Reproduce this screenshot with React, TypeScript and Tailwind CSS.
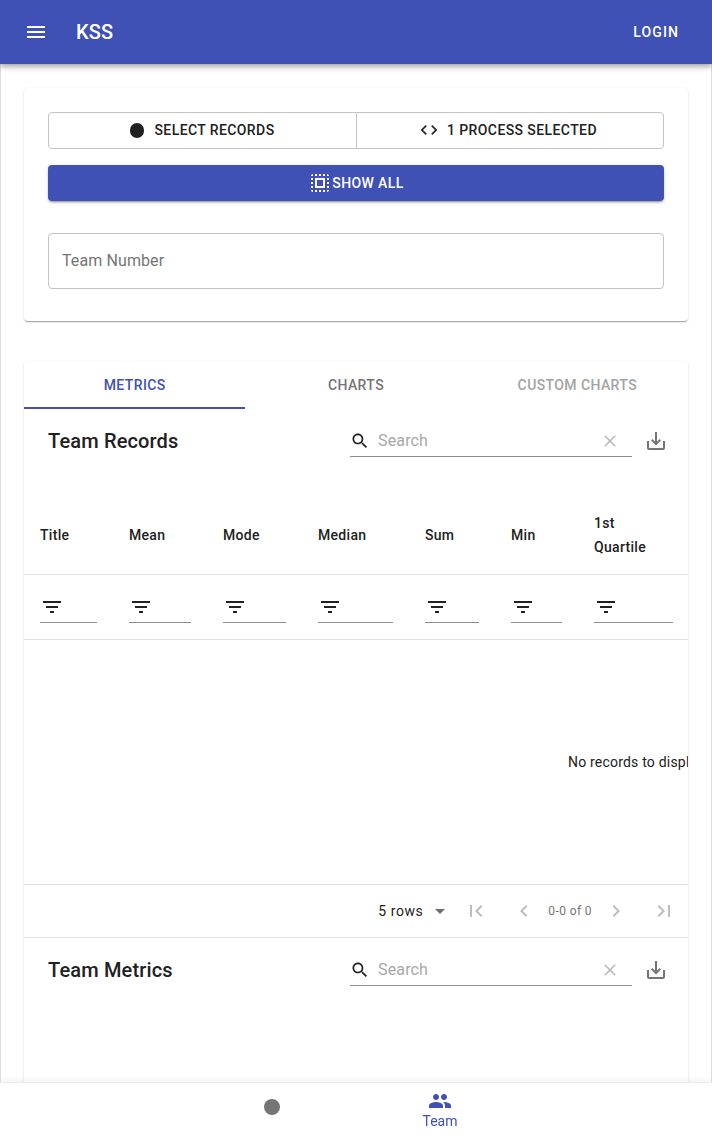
import React from "react";

const paths = {
  menu: "M3 18h18v-2H3v2zm0-5h18v-2H3v2zm0-7v2h18V6H3z",
  code: "M9.4 16.6L4.8 12l4.6-4.6L8 6l-6 6 6 6 1.4-1.4zm5.2 0l4.6-4.6-4.6-4.6L16 6l6 6-6 6-1.4-1.4z",
  selectAll:
    "M3 5h2V3c-1.1 0-2 .9-2 2zm0 8h2v-2H3v2zm4 8h2v-2H7v2zM3 9h2V7H3v2zm10-6h-2v2h2V3zm6 0v2h2c0-1.1-.9-2-2-2zM5 21v-2H3c0 1.1.9 2 2 2zm-2-4h2v-2H3v2zM9 3H7v2h2V3zm2 18h2v-2h-2v2zm8-8h2v-2h-2v2zm0 8c1.1 0 2-.9 2-2h-2v2zm0-12h2V7h-2v2zm0 8h2v-2h-2v2zm-4 4h2v-2h-2v2zm0-16h2V3h-2v2zM7 17h10V7H7v10zm2-8h6v6H9V9z",
  search:
    "M15.5 14h-.79l-.28-.27C15.41 12.59 16 11.11 16 9.5 16 5.91 13.09 3 9.5 3S3 5.91 3 9.5 5.91 16 9.5 16c1.61 0 3.09-.59 4.23-1.57l.27.28v.79l5 4.99L20.49 19l-4.99-5zm-6 0C7.01 14 5 11.99 5 9.5S7.01 5 9.5 5 14 7.01 14 9.5 11.99 14 9.5 14z",
  clear:
    "M19 6.41L17.59 5 12 10.59 6.41 5 5 6.41 10.59 12 5 17.59 6.41 19 12 13.41 17.59 19 19 17.59 13.41 12z",
  save: "M19 12v7H5v-7H3v7c0 1.1.9 2 2 2h14c1.1 0 2-.9 2-2v-7h-2zm-6 .67l2.59-2.58L17 11.5l-5 5-5-5 1.41-1.41L11 12.67V3h2z",
  filter: "M10 18h4v-2h-4v2zM3 6v2h18V6H3zm3 7h12v-2H6v2z",
  first: "M18.41 16.59L13.82 12l4.59-4.59L17 6l-6 6 6 6zM6 6h2v12H6z",
  prev: "M15.41 7.41L14 6l-6 6 6 6 1.41-1.41L10.83 12z",
  next: "M10 6L8.59 7.41 13.17 12l-4.58 4.59L10 18l6-6z",
  last: "M5.59 7.41L10.18 12l-4.59 4.59L7 18l6-6-6-6zM16 6h2v12h-2z",
  people:
    "M16 11c1.66 0 2.99-1.34 2.99-3S17.66 5 16 5c-1.66 0-3 1.34-3 3s1.34 3 3 3zm-8 0c1.66 0 2.99-1.34 2.99-3S9.66 5 8 5C6.34 5 5 6.34 5 8s1.34 3 3 3zm0 2c-2.33 0-7 1.17-7 3.5V19h14v-2.5c0-2.33-4.67-3.5-7-3.5zm8 0c-.29 0-.62.02-.97.05 1.16.84 1.97 1.97 1.97 3.45V19h6v-2.5c0-2.33-4.67-3.5-7-3.5z",
  drop: "M7 10l5 5 5-5z",
};

const Icon = ({ d, className }: { d: string; className: string }) => (
  <svg viewBox="0 0 24 24" fill="currentColor" className={`shrink-0 ${className}`}>
    <path d={d} />
  </svg>
);

const columns = [
  { label: "Title", input: "w-[57px]" },
  { label: "Mean", input: "w-[62px]" },
  { label: "Mode", input: "w-[63px]" },
  { label: "Median", input: "w-[75px]" },
  { label: "Sum", input: "w-[54px]" },
  { label: "Min", input: "w-[51px]" },
  { label: "1st Quartile", input: "w-[79px]" },
];

const gridCols = "grid grid-cols-[89px_94px_95px_107px_86px_83px_110px]";

const Toolbar = ({ title }: { title: string }) => (
  <div className="flex h-16 items-center pl-6 pr-5">
    <h2 className="flex-1 text-[20px] font-medium tracking-[0.15px] text-[#212121]">{title}</h2>
    <div className="flex h-8 w-[282px] items-center border-b border-[#8c8c8c]">
      <Icon d={paths.search} className="h-5 w-5 text-[#212121]" />
      <span className="ml-2 flex-1 text-base tracking-[0.15px] text-[#a8a8a8]">Search</span>
      <Icon d={paths.clear} className="mr-3 h-5 w-5 text-[#bdbdbd]" />
    </div>
    <div className="ml-3 flex h-6 w-6 items-center justify-center text-[#757575]">
      <Icon d={paths.save} className="h-6 w-6" />
    </div>
  </div>
);

export default function App() {
  return (
    <div className="relative h-[1138px] overflow-hidden bg-white font-['Roboto',sans-serif]">
      <header className="relative z-10 flex h-16 items-center bg-[#3f51b5] pl-6 pr-[33px] text-white shadow-[0_2px_4px_-1px_rgba(0,0,0,0.2),0_4px_5px_0_rgba(0,0,0,0.14),0_1px_10px_0_rgba(0,0,0,0.12)]">
        <Icon d={paths.menu} className="h-6 w-6" />
        <span className="ml-7 flex-1 text-[20px] font-medium tracking-[0.15px]">KSS</span>
        <span className="text-sm font-medium tracking-[1.1px]">LOGIN</span>
      </header>

      <main className="h-[1074px] border-x border-[#dcdcdc] px-[23px] pt-6">
        <section className="h-[233px] rounded bg-white p-6 shadow-[0_2px_1px_-1px_rgba(0,0,0,0.2),0_1px_1px_0_rgba(0,0,0,0.14),0_1px_3px_0_rgba(0,0,0,0.12)]">
          <div className="flex h-[37px] rounded border border-[#c4c4c4] pb-px text-sm font-medium tracking-[0.4px] text-[#212121]">
            <div className="-mb-px flex w-[308px] items-center justify-center gap-[10px] border-r border-[#c4c4c4] pb-px">
              <span className="h-[15px] w-[14px] rounded-full bg-[#212121]" />
              <span>SELECT RECORDS</span>
            </div>
            <div className="flex flex-1 items-center justify-center gap-2 pr-1">
              <Icon d={paths.code} className="h-5 w-5" />
              <span>1 PROCESS SELECTED</span>
            </div>
          </div>
          <div className="mt-4 flex h-9 items-center justify-center rounded bg-[#3f51b5] text-sm font-medium tracking-[0.4px] text-white shadow-[0_3px_1px_-2px_rgba(0,0,0,0.2),0_2px_2px_0_rgba(0,0,0,0.14),0_1px_5px_0_rgba(0,0,0,0.12)]">
            <Icon d={paths.selectAll} className="h-6 w-6" />
            <span>SHOW ALL</span>
          </div>
          <div className="mt-8 flex h-14 items-center rounded border border-[#c4c4c4] px-[13px] text-base tracking-[0.1px] text-[#757575]">
            Team Number
          </div>
        </section>

        <section className="mt-10 h-[760px] rounded-t bg-white shadow-[0_2px_1px_-1px_rgba(0,0,0,0.2),0_1px_1px_0_rgba(0,0,0,0.14),0_1px_3px_0_rgba(0,0,0,0.12)]">
          <div className="grid h-12 grid-cols-3 text-sm font-medium tracking-[0.4px]">
            <div className="flex items-center justify-center border-b-2 border-[#3f51b5] pt-[2px] text-[#3f51b5]">METRICS</div>
            <div className="flex items-center justify-center text-[#757575]">CHARTS</div>
            <div className="flex items-center justify-center text-[#a3a3a3]">CUSTOM CHARTS</div>
          </div>

          <Toolbar title="Team Records" />

          <div className="overflow-hidden text-sm text-[#212121]">
            <div className={`${gridCols} mt-[25px] h-[77px] w-[700px] items-center border-b border-[#e0e0e0] pb-[3px] font-medium leading-6 tracking-[0.3px]`}>
              {columns.map((col) => (
                <div key={col.label} className="pl-4 pr-[26px]">{col.label}</div>
              ))}
            </div>
            <div className={`${gridCols} h-[65px] w-[700px] items-center border-b border-[#e0e0e0]`}>
              {columns.map((col) => (
                <div key={col.label} className="pl-4">
                  <div className={`flex h-8 items-center border-b border-[#8c8c8c] text-[#212121] ${col.input}`}>
                    <Icon d={paths.filter} className="h-6 w-6" />
                  </div>
                </div>
              ))}
            </div>
            <div className="flex h-[245px] items-center whitespace-nowrap border-b border-[#e0e0e0] pl-[544px] tracking-[0.2px]">
              No records to display
            </div>
            <div className="flex h-[53px] items-center justify-end border-b border-[#e0e0e0] pr-3 text-[#757575]">
              <span className="tracking-[0.55px] text-[#212121]">5 rows</span>
              <Icon d={paths.drop} className="ml-[5px] h-6 w-6 text-[#6e6e6e]" />
              <Icon d={paths.first} className="ml-3 h-6 w-6 text-[#bdbdbd]" />
              <Icon d={paths.prev} className="ml-6 h-6 w-6 text-[#bdbdbd]" />
              <span className="ml-3 text-xs tracking-[0.4px] text-[#757575]">0-0 of 0</span>
              <Icon d={paths.next} className="ml-3 h-6 w-6 text-[#bdbdbd]" />
              <Icon d={paths.last} className="ml-6 h-6 w-6 text-[#bdbdbd]" />
            </div>
          </div>

          <Toolbar title="Team Metrics" />
        </section>
      </main>

      <nav className="fixed inset-x-0 bottom-0 z-20 flex h-14 justify-center border-t border-[#ededed] bg-white shadow-[0_-2px_6px_rgba(0,0,0,0.06)]">
        <div className="flex w-[168px] justify-center pt-4">
          <span className="h-4 w-4 rounded-full bg-[#757575]" />
        </div>
        <div className="flex w-[168px] flex-col items-center pt-[6px] text-[#3f51b5]">
          <Icon d={paths.people} className="h-6 w-6" />
          <span className="text-sm leading-4">Team</span>
        </div>
      </nav>
    </div>
  );
}
